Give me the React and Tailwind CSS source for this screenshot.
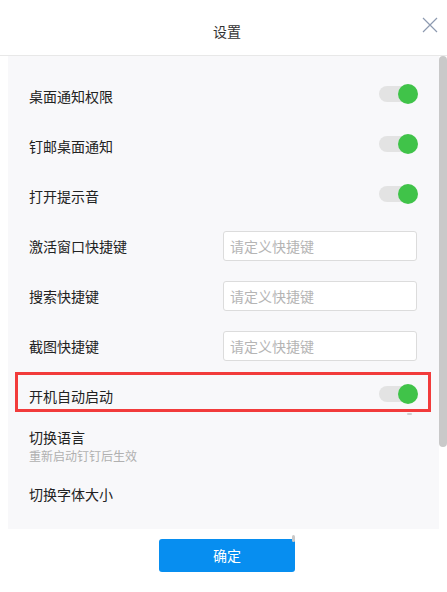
import React from "react";

const font = { fontFamily: '"Noto Sans CJK SC", "Microsoft YaHei", sans-serif' };

function Toggle() {
  return (
    <div className="relative w-[39px] h-[20px] shrink-0">
      <div className="absolute left-0 top-[2px] w-[32px] h-[16px] rounded-full bg-[#e3e3e3]" />
      <div className="absolute right-0 top-0 w-[20px] h-[20px] rounded-full bg-[#40c349]" />
    </div>
  );
}

function Row({ label, children, extra }) {
  return (
    <div className="relative h-[50px] flex items-center justify-between pl-[21px] pr-[21px]">
      <span className="text-[14px] leading-[20px] text-[#222] pt-[4px]">{label}</span>
      {children}
      {extra}
    </div>
  );
}

function KeyInput() {
  return (
    <div className="w-[194px] h-[30px] mt-[4px] mr-px bg-white border border-[#dcdcdc] rounded-[3px] flex items-center pl-[6px] text-[14px] text-[#b5b5b5]">
      请定义快捷键
    </div>
  );
}

export default function App() {
  return (
    <div className="relative w-[447px] h-[592px] bg-white overflow-hidden" style={font}>
      <div className="h-[56px] flex items-center justify-center pt-[7px] pl-[7px] border-b border-[#e8e8e8]">
        <span className="text-[14px] text-[#333]">设置</span>
      </div>
      <svg className="absolute left-[422px] top-[17px]" width="16" height="16" viewBox="0 0 16 16">
        <path d="M1 1 L15 15 M15 1 L1 15" stroke="#8d9ab0" strokeWidth="1.2" fill="none" />
      </svg>

      <div className="flex">
        <div className="ml-[8px] w-[431px] h-[473px] bg-[#f8f8fa] pt-[13px]">
          <Row label="桌面通知权限"><Toggle /></Row>
          <Row label="钉邮桌面通知"><Toggle /></Row>
          <Row label="打开提示音"><Toggle /></Row>
          <Row label="激活窗口快捷键"><KeyInput /></Row>
          <Row label="搜索快捷键"><KeyInput /></Row>
          <Row label="截图快捷键"><KeyInput /></Row>
          <Row
            label="开机自动启动"
            extra={
              <div className="absolute left-[7px] right-[8px] top-[3px] h-[40px] border-[3px] border-[#f23b3b]" />
            }
          >
            <Toggle />
          </Row>
          <div className="pl-[21px] pt-[8px]">
            <div className="text-[14px] leading-[20px] text-[#222]">切换语言</div>
            <div className="text-[12px] leading-[18px] text-[#b0b0b0]">重新启动钉钉后生效</div>
            <div className="mt-[19px] text-[14px] leading-[20px] text-[#222]">切换字体大小</div>
          </div>
        </div>
        <div className="w-[8px] h-[391px] bg-[#c9c9c9] rounded-[4px]" />
      </div>

      <div className="mt-[10px] ml-[159px] w-[136px] h-[33px] rounded-[3px] bg-[#078ef0] flex items-center justify-center text-white text-[14px]">
        确定
      </div>

      <div className="absolute left-[407px] top-[413px] w-[5px] h-[2px] rounded-full bg-[#d0d0d0]" />
      <div className="absolute left-[292px] top-[535px] w-[3px] h-[7px] rounded-full bg-[#c8c8c8]" />
    </div>
  );
}
